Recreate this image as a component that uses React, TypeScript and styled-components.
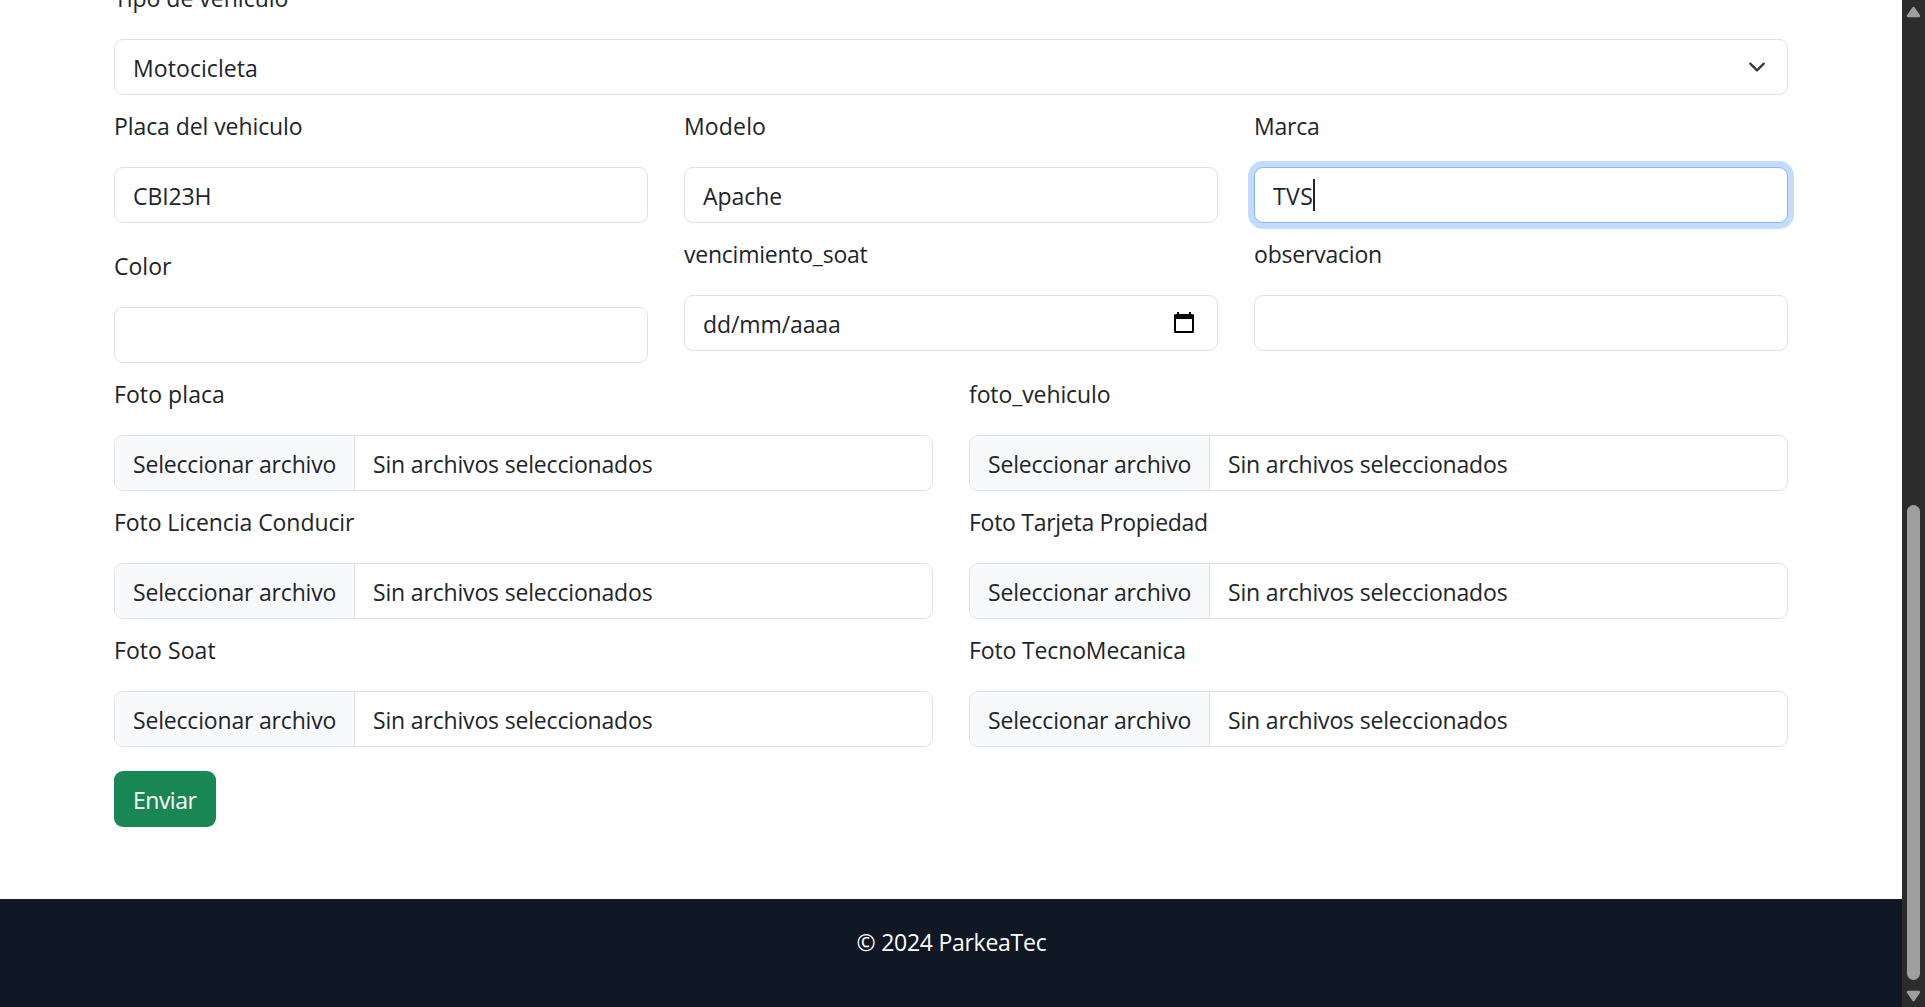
import React from 'react';
import styled, { createGlobalStyle, css } from 'styled-components';

const GlobalStyle = createGlobalStyle`
  *, *::before, *::after { box-sizing: border-box; }
  html, body { margin: 0; height: 100%; overflow: hidden; background: #fff; }
  body {
    color: #212529;
    font-family: "Open Sans", "Noto Sans", sans-serif;
    font-size: 23px;
    line-height: 36px;
  }
`;

const Window = styled.div`
  display: flex;
  width: 100vw;
  height: 100vh;
  overflow: hidden;
`;

const Page = styled.div`
  flex: 1;
  min-width: 0;
  display: flex;
  flex-direction: column;
  overflow: hidden;
`;

const Form = styled.form`
  margin-top: -33px;
  padding: 0 114px 72px;
  flex: none;
`;

const Row = styled.div<{ $columns: number }>`
  display: grid;
  grid-template-columns: repeat(${(p) => p.$columns}, 1fr);
  column-gap: 36px;
`;

const FieldBox = styled.div<{ $lowered?: boolean }>`
  padding-top: ${(p) => (p.$lowered ? 25 : 13)}px;
`;

const Label = styled.label<{ $tracking: number }>`
  display: block;
  height: 36px;
  margin-bottom: 23px;
  white-space: nowrap;
  letter-spacing: ${(p) => p.$tracking}px;
`;

const controlFrame = css`
  display: flex;
  height: 56px;
  border: 1px solid #dee2e6;
  border-radius: 9px;
  background: #fff;
  white-space: nowrap;
`;

const Control = styled.div<{ $focused?: boolean }>`
  ${controlFrame}
  justify-content: space-between;
  padding: 10px 18px 8px;
  ${(p) =>
    p.$focused &&
    css`
      border-color: #86b7fe;
      box-shadow: 0 0 0 6px #c2dbff;
    `}
`;

const Value = styled.span<{ $tracking: number }>`
  display: flex;
  letter-spacing: ${(p) => p.$tracking}px;
`;

const Caret = styled.span`
  width: 2px;
  height: 32px;
  margin-top: 1px;
  background: #212529;
`;

const FileControl = styled.div`
  ${controlFrame}
  overflow: hidden;
`;

const FileButton = styled.span`
  width: 240px;
  padding: 10px 0 8px 18px;
  border-right: 1px solid #dee2e6;
  background: #f8f9fa;
  letter-spacing: -0.18px;
`;

const FileName = styled.span`
  padding: 10px 18px 8px;
  letter-spacing: -0.17px;
`;

const ChevronIcon = styled.svg`
  width: 24px;
  height: 18px;
  margin-top: 8px;
`;

const CalendarIcon = styled.svg`
  width: 20px;
  height: 21px;
  margin: 6px 5px 0 0;
`;

const SubmitButton = styled.button`
  display: block;
  width: 102px;
  height: 56px;
  margin-top: 24px;
  padding: 2px 0 0 19px;
  border: 0;
  border-radius: 9px;
  background: #198754;
  color: #fff;
  font: inherit;
  letter-spacing: -0.5px;
  text-align: left;
`;

const Footer = styled.footer`
  flex: 1;
  padding: 25px 0 0 1px;
  background: #101725;
  color: #fff;
  text-align: center;
  letter-spacing: -0.27px;
`;

const ScrollTrack = styled.div`
  display: flex;
  flex-direction: column;
  align-items: center;
  width: 23px;
  padding: 6px 0 5px;
  background: #2c2c2c;
`;

const ScrollArrow = styled.svg`
  width: 15px;
  height: 12px;
  flex: none;
`;

const ScrollThumb = styled.div`
  width: 13px;
  height: 475px;
  margin: auto 0 10px;
  border-radius: 7px;
  background: #9f9f9f;
`;

interface FieldProps {
  label: string;
  tracking: number;
  lowered?: boolean;
  children: React.ReactNode;
}

function Field({ label, tracking, lowered, children }: FieldProps) {
  return (
    <FieldBox $lowered={lowered}>
      <Label $tracking={tracking}>{label}</Label>
      {children}
    </FieldBox>
  );
}

function FileField({ label, tracking }: { label: string; tracking: number }) {
  return (
    <Field label={label} tracking={tracking}>
      <FileControl>
        <FileButton>Seleccionar archivo</FileButton>
        <FileName>Sin archivos seleccionados</FileName>
      </FileControl>
    </Field>
  );
}

const fileFields = [
  { label: 'Foto placa', tracking: 0.08 },
  { label: 'foto_vehiculo', tracking: -0.1 },
  { label: 'Foto Licencia Conducir', tracking: -0.07 },
  { label: 'Foto Tarjeta Propiedad', tracking: -0.28 },
  { label: 'Foto Soat', tracking: 0.06 },
  { label: 'Foto TecnoMecanica', tracking: -0.14 },
];

export default function App() {
  return (
    <>
      <GlobalStyle />
      <Window>
        <Page>
          <Form>
            <Field label="Tipo de vehiculo" tracking={0}>
              <Control>
                <Value $tracking={0.08}>Motocicleta</Value>
                <ChevronIcon viewBox="0 0 16 16" fill="none">
                  <path
                    d="m2 5 6 6 6-6"
                    stroke="#343a40"
                    strokeWidth="2"
                    strokeLinecap="round"
                    strokeLinejoin="round"
                  />
                </ChevronIcon>
              </Control>
            </Field>
            <Row $columns={3}>
              <Field label="Placa del vehiculo" tracking={-0.08}>
                <Control>
                  <Value $tracking={-0.1}>CBI23H</Value>
                </Control>
              </Field>
              <Field label="Modelo" tracking={0.16}>
                <Control>
                  <Value $tracking={-0.04}>Apache</Value>
                </Control>
              </Field>
              <Field label="Marca" tracking={-0.2}>
                <Control $focused>
                  <Value $tracking={0.4}>
                    TVS
                    <Caret />
                  </Value>
                </Control>
              </Field>
            </Row>
            <Row $columns={3}>
              <Field label="Color" tracking={0} lowered>
                <Control />
              </Field>
              <Field label="vencimiento_soat" tracking={-0.24}>
                <Control>
                  <Value $tracking={-0.1}>dd/mm/aaaa</Value>
                  <CalendarIcon viewBox="0 0 20 21">
                    <path
                      fill="#000"
                      fillRule="evenodd"
                      d="M3 0h2v2h10V0h2v2h1.5A1.5 1.5 0 0 1 20 3.5v16a1.5 1.5 0 0 1-1.5 1.5h-17A1.5 1.5 0 0 1 0 19.5v-16A1.5 1.5 0 0 1 1.5 2H3zM2 7v12h16V7z"
                    />
                  </CalendarIcon>
                </Control>
              </Field>
              <Field label="observacion" tracking={-0.2}>
                <Control />
              </Field>
            </Row>
            <Row $columns={2}>
              {fileFields.map((field) => (
                <FileField key={field.label} {...field} />
              ))}
            </Row>
            <SubmitButton type="button">Enviar</SubmitButton>
          </Form>
          <Footer>© 2024 ParkeaTec</Footer>
        </Page>
        <ScrollTrack>
          <ScrollArrow viewBox="0 0 15 12">
            <path
              d="M7.5 2 13 10H2z"
              fill="#9f9f9f"
              stroke="#9f9f9f"
              strokeWidth="2.5"
              strokeLinejoin="round"
            />
          </ScrollArrow>
          <ScrollThumb />
          <ScrollArrow viewBox="0 0 15 12">
            <path
              d="M7.5 10 13 2H2z"
              fill="#9f9f9f"
              stroke="#9f9f9f"
              strokeWidth="2.5"
              strokeLinejoin="round"
            />
          </ScrollArrow>
        </ScrollTrack>
      </Window>
    </>
  );
}
